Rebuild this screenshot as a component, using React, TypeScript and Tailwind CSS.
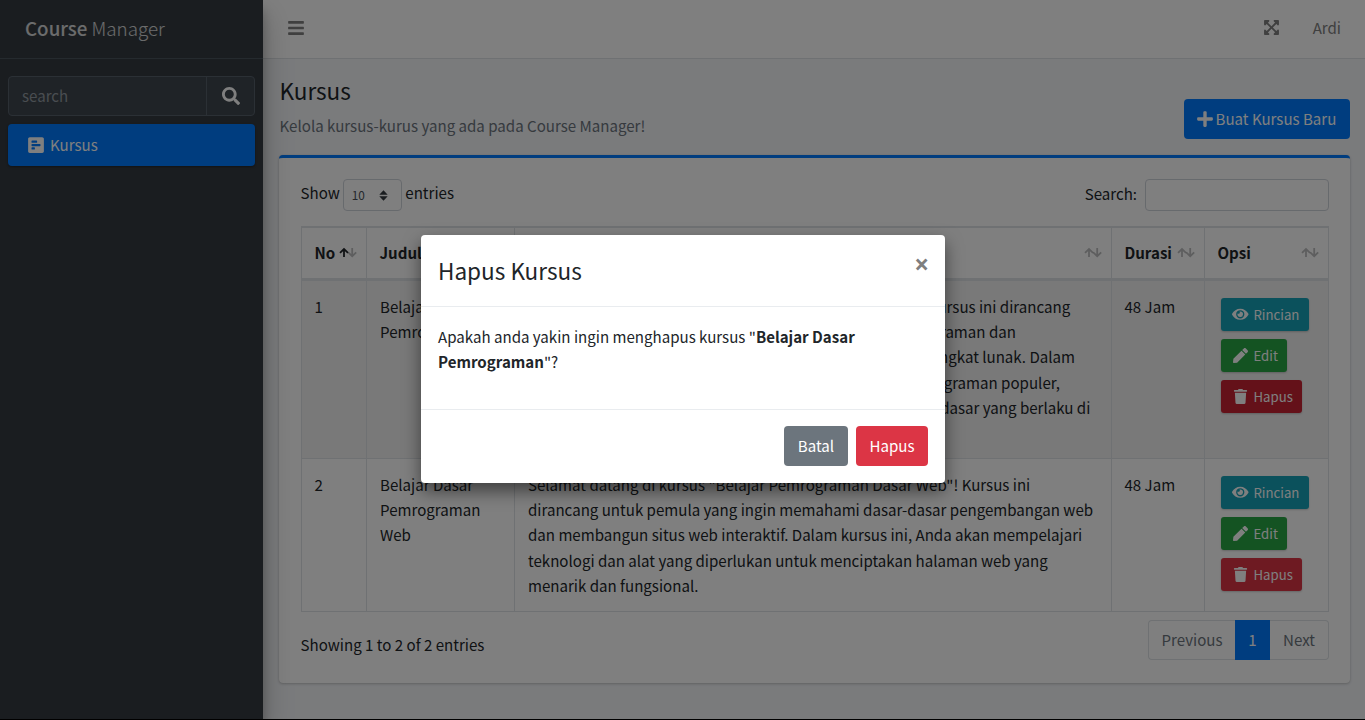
import { FaBars, FaExpandArrowsAlt, FaEye, FaPen, FaPlus, FaPollH, FaSearch, FaTrash } from "react-icons/fa";

type Course = { no: number; title: string; description: string[]; duration: string };

const courses: Course[] = [
  {
    no: 1,
    title: "Belajar Dasar Pemrograman",
    description: [
      'Selamat datang di kursus "Belajar Dasar Pemrograman"! Kursus ini dirancang',
      "untuk pemula yang ingin mempelajari dasar-dasar pemrograman dan",
      "bagaimana cara membangun aplikasi profesional dan perangkat lunak. Dalam",
      "kursus ini, Anda akan mempelajari beberapa bahasa pemrograman populer,",
      "konsep logika, perulangan, algoritma, serta prinsip-prinsip dasar yang berlaku di",
      "dunia pemrograman.",
    ],
    duration: "48 Jam",
  },
  {
    no: 2,
    title: "Belajar Dasar Pemrograman Web",
    description: [
      'Selamat datang di kursus "Belajar Pemrograman Dasar Web"! Kursus ini',
      "dirancang untuk pemula yang ingin memahami dasar-dasar pengembangan web",
      "dan membangun situs web interaktif. Dalam kursus ini, Anda akan mempelajari",
      "teknologi dan alat yang diperlukan untuk menciptakan halaman web yang",
      "menarik dan fungsional.",
    ],
    duration: "48 Jam",
  },
];

const columns = "grid grid-cols-[65px_148px_597px_93px_125px]";

function SortIcon({ ascending = false }: { ascending?: boolean }) {
  return (
    <svg width="18" height="12" viewBox="0 0 18 12" fill="none" stroke="#212529" strokeWidth="1.8" className="shrink-0">
      <path d="M13.2 1V9.4M9.2 5.4L13.2 9.2L17.2 5.4" opacity="0.3" />
      <path d="M5 10V1.8M1 5.8L5 2L9 5.8" opacity={ascending ? 1 : 0.3} />
    </svg>
  );
}

function HeaderCell({ label, ascending, last }: { label: string; ascending?: boolean; last?: boolean }) {
  return (
    <div className={`flex items-center justify-between border-l border-[#dee2e6] pl-[12.5px] pr-[9px] font-bold ${last ? "border-r" : ""}`}>
      <span>{label}</span>
      <SortIcon ascending={ascending} />
    </div>
  );
}

function Sidebar() {
  return (
    <aside className="relative z-10 flex h-full w-[263px] shrink-0 flex-col bg-[#343a40] shadow-[0_14px_28px_rgba(0,0,0,.25),0_10px_10px_rgba(0,0,0,.22)]">
      <div className="h-[59px] border-b border-[#4b545c] pl-[25px] pt-[12px] text-[18.75px] font-light leading-[32px] text-white/80">
        <b className="font-medium">Course</b> Manager
      </div>
      <div className="mx-2 mt-[17px] flex h-10 rounded border border-[#56606a] bg-[#3f474e] text-[15.09px]">
        <div className="flex flex-1 items-center pl-[13px] text-[#939ba2]">search</div>
        <div className="flex w-[48px] items-center justify-center border-l border-[#56606a] pb-[1px] text-white">
          <FaSearch size={18} />
        </div>
      </div>
      <div className="mx-2 mt-2 flex h-[42px] items-center rounded bg-[#007bff] pl-[19px] text-white shadow-[0_1px_3px_rgba(0,0,0,.12),0_1px_2px_rgba(0,0,0,.24)]">
        <FaPollH size={18} className="mb-[1px]" />
        <span className="pl-[5px]">Kursus</span>
      </div>
    </aside>
  );
}

function Actions({ active }: { active: boolean }) {
  const base = "flex h-[33px] items-center rounded-[3px] pl-[10px] pr-[9px] text-[13.2px] text-white shadow-[0_1px_2px_rgba(0,0,0,.2)]";
  const icon = "mb-[1px] mr-[3.5px] flex w-[19px] justify-center";
  return (
    <div className="flex flex-col items-start gap-2 border-x border-[#dee2e6] pl-4 pt-[17px]">
      <div className={`${base} w-[88px] bg-[#17a2b8]`}>
        <span className={icon}><FaEye size={16.5} /></span>Rincian
      </div>
      <div className={`${base} w-[66px] bg-[#28a745]`}>
        <span className={icon}><FaPen size={15} /></span>Edit
      </div>
      <div className={`${base} w-[81px] ${active ? "bg-[#c82333]" : "bg-[#dc3545]"}`}>
        <span className={icon}><FaTrash size={15} /></span>Hapus
      </div>
    </div>
  );
}

function CourseTable() {
  return (
    <div className="mt-[15px] w-[1028px] border-t-2 border-[#dee2e6]">
      <div className={`${columns} h-[53px] border-b-[3px] border-[#dee2e6]`}>
        <HeaderCell label="No" ascending />
        <HeaderCell label="Judul" />
        <HeaderCell label="Deskripsi" />
        <HeaderCell label="Durasi" />
        <HeaderCell label="Opsi" last />
      </div>
      {courses.map((course, index) => (
        <div key={course.no} className={`${columns} border-b border-[#dee2e6] ${index === 0 ? "h-[178px] bg-[#f2f2f2]" : "h-[153px]"}`}>
          <div className="border-l border-[#dee2e6] pl-[12.5px] pt-[13px]">{course.no}</div>
          <div className="border-l border-[#dee2e6] pl-[13px] pr-3 pt-[13px]">{course.title}</div>
          <div className="border-l border-[#dee2e6] pl-[13px] pt-[13px] whitespace-nowrap">
            {course.description.map((line, i) => (
              <div key={line} className={index === 0 && i === 4 ? "-ml-[2px]" : ""}>{line}</div>
            ))}
          </div>
          <div className="border-l border-[#dee2e6] pl-[12.5px] pt-[13px]">{course.duration}</div>
          <Actions active={index === 0} />
        </div>
      ))}
    </div>
  );
}

function Modal() {
  return (
    <div className="absolute left-[421px] top-[235px] z-30 flex h-[248px] w-[524px] flex-col rounded bg-white shadow-[0_8px_17px_rgba(0,0,0,.5)]">
      <div className="flex h-[72px] items-start justify-between border-b border-[#e9ecef] pl-[17px] pr-4 pt-[16px]">
        <h4 className="text-[22.56px] leading-[38px]">Hapus Kursus</h4>
        <span className="pt-[1px] font-['Open_Sans',sans-serif] text-[26px] font-bold leading-[25px] text-[#7f7f7f]">×</span>
      </div>
      <div className="h-[102px] px-[17px] pt-[17px]">
        Apakah anda yakin ingin menghapus kursus "<b>Belajar Dasar<br />Pemrograman</b>"?
      </div>
      <div className="flex flex-1 items-start justify-end gap-2 border-t border-[#e9ecef] pr-[17px] pt-4 text-white">
        <button className="h-10 w-16 rounded bg-[#6c757d]">Batal</button>
        <button className="h-10 w-[72px] rounded bg-[#dc3545]">Hapus</button>
      </div>
    </div>
  );
}

export default function App() {
  return (
    <div className="relative flex h-[720px] w-[1365px] overflow-hidden bg-[#f4f6f9] font-['Noto_Sans_CJK_SC',sans-serif] text-[15.09px] leading-[25.2px] text-[#212529]">
      <Sidebar />
      <div className="flex flex-1 flex-col">
        <header className="flex h-[59px] items-center justify-between border-b border-[#dee2e6] bg-white pb-[2px] pl-[24px] pr-[24px] text-[#808080]">
          <FaBars size={18} />
          <div className="flex items-center gap-[33px]">
            <FaExpandArrowsAlt size={17} />
            <span>Ardi</span>
          </div>
        </header>
        <div className="flex h-[96px] items-start justify-between pl-[16.5px] pr-[15px]">
          <div>
            <h1 className="pt-[16px] text-[22.56px] leading-[30px]">Kursus</h1>
            <p className="pt-[8px] text-[#6c757d]">Kelola kursus-kurus yang ada pada Course Manager!</p>
          </div>
          <button className="mt-10 flex h-10 w-[166px] items-center rounded bg-[#007bff] pl-[12px] text-white">
            <FaPlus size={18} className="mb-[1px]" />
            <span className="pl-[1.5px]">Buat Kursus Baru</span>
          </button>
        </div>
        <section className="ml-4 mr-[15px] h-[528px] rounded border-t-[3px] border-[#007bff] bg-white pl-[22px] pt-[21px] shadow-[0_0_1px_rgba(0,0,0,.125),0_1px_3px_rgba(0,0,0,.2)]">
          <div className="flex h-8 w-[1028px] items-center justify-between">
            <div className="-ml-[0.5px] flex items-center">
              <span className="pb-[4.5px]">Show</span>
              <div className="ml-[3px] mr-[3.5px] flex h-8 w-[59px] items-center justify-between rounded border border-[#ced4da] pl-[8px] pr-[13px] text-[11.8px] text-[#495057]">
                10
                <svg width="9" height="11" viewBox="0 0 9 11" fill="#343a40">
                  <path d="M0.3 4.7L4.5 0.3L8.7 4.7ZM0.3 6.3H8.7L4.5 10.7Z" />
                </svg>
              </div>
              <span className="pb-[4.5px]">entries</span>
            </div>
            <div className="flex items-center">
              <span className="pb-[2px]">Search:</span>
              <div className="ml-2 h-8 w-[184px] rounded border border-[#ced4da]" />
            </div>
          </div>
          <CourseTable />
          <div className="flex w-[1028px] justify-between pt-2">
            <div className="-ml-[0.5px] pt-[12px]">Showing 1 to 2 of 2 entries</div>
            <div className="flex h-10 text-[#6c757d]">
              <div className="flex w-[87px] items-center justify-center rounded-l border border-r-0 border-[#dee2e6]">Previous</div>
              <div className="flex w-[35px] items-center justify-center bg-[#007bff] text-white">1</div>
              <div className="flex w-[59px] items-center justify-center rounded-r border border-l-0 border-[#dee2e6]">Next</div>
            </div>
          </div>
        </section>
      </div>
      <div className="absolute inset-0 z-20 border-b border-black bg-black/50" />
      <Modal />
    </div>
  );
}
